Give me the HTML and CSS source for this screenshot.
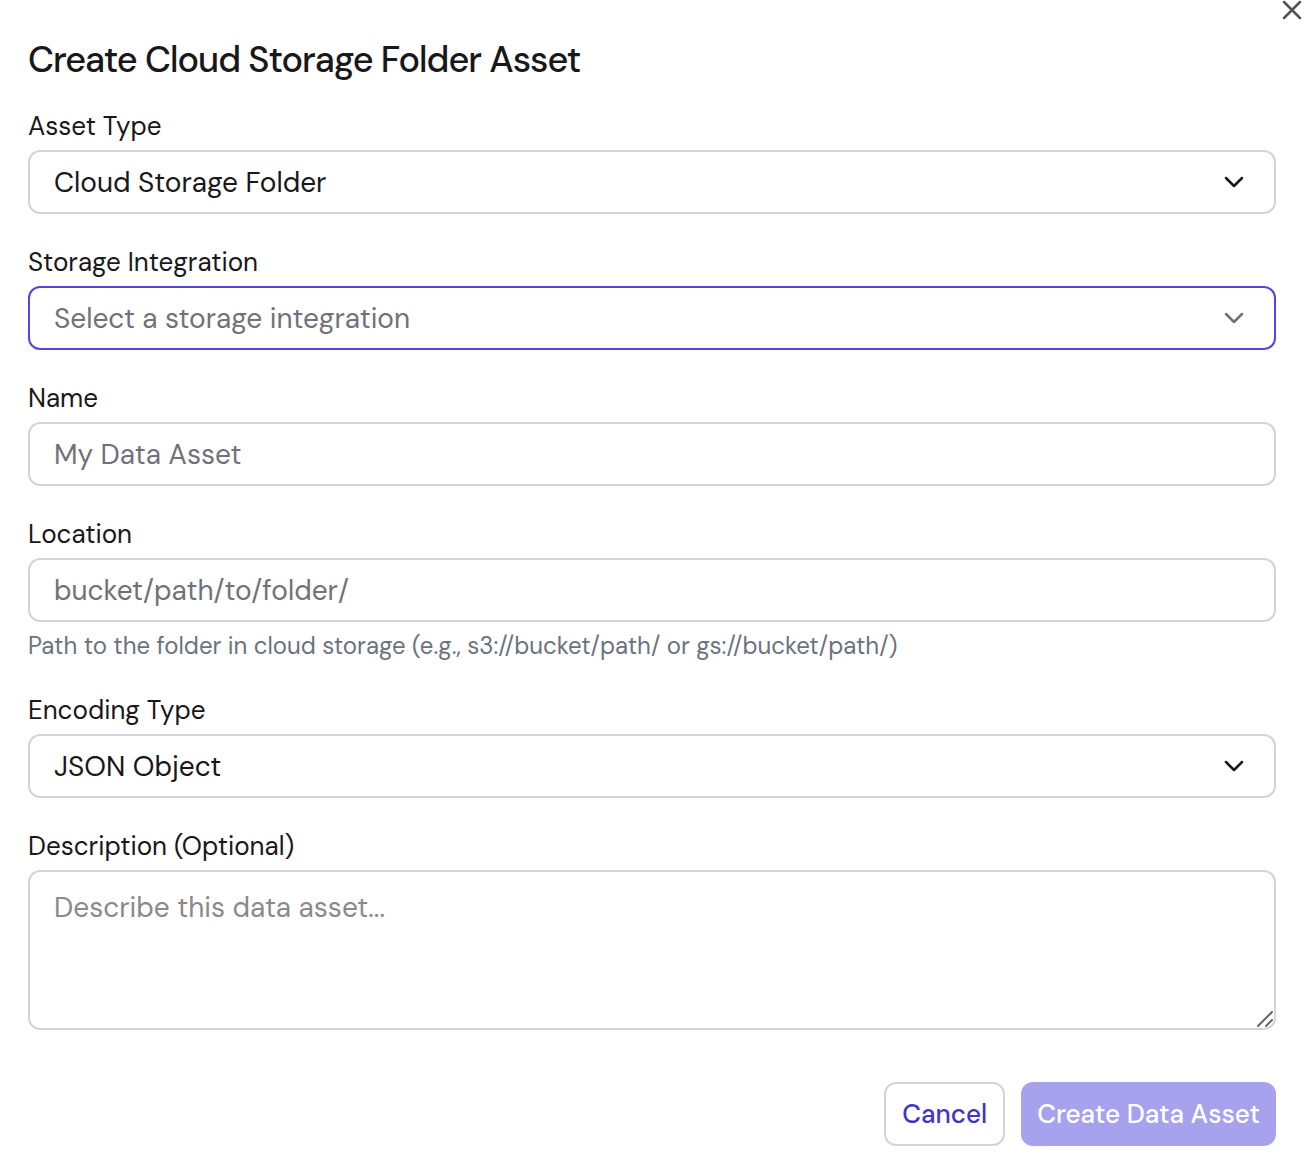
FILE: index.html
```html
<!DOCTYPE html>
<html lang="en">
<head>
    <meta charset="UTF-8">
    <meta name="viewport" content="width=device-width, initial-scale=1">
    <title>Create Cloud Storage Folder Asset</title>
    <link rel="stylesheet" href="styles.css">
</head>
<body>
<main class="dialog">
    <button type="button" class="close" aria-label="Close">
        <svg viewBox="0 0 20 20"><path d="M2 2l16 16M18 2L2 18"/></svg>
    </button>
    <h1 class="title">Create Cloud Storage Folder Asset</h1>
    <form class="form">
        <div class="field">
            <label for="assetType">Asset Type</label>
            <div class="select">
                <select id="assetType" class="control">
                    <option>Cloud Storage Folder</option>
                </select>
                <svg class="chevron" viewBox="0 0 20 12"><path d="M2 2l8 8 8-8"/></svg>
            </div>
        </div>
        <div class="field">
            <label for="integration">Storage Integration</label>
            <div class="select empty">
                <select id="integration" class="control active">
                    <option value="">Select a storage integration</option>
                </select>
                <svg class="chevron" viewBox="0 0 20 12"><path d="M2 2l8 8 8-8"/></svg>
            </div>
        </div>
        <div class="field">
            <label for="name">Name</label>
            <input type="text" id="name" class="control" placeholder="My Data Asset">
        </div>
        <div class="field">
            <label for="location">Location</label>
            <input type="text" id="location" class="control" placeholder="bucket/path/to/folder/" aria-describedby="locationHelp">
            <p class="help" id="locationHelp">Path to the folder in cloud storage (e.g., s3://bucket/path/ or gs://bucket/path/)</p>
        </div>
        <div class="field">
            <label for="encoding">Encoding Type</label>
            <div class="select">
                <select id="encoding" class="control">
                    <option>JSON Object</option>
                </select>
                <svg class="chevron" viewBox="0 0 20 12"><path d="M2 2l8 8 8-8"/></svg>
            </div>
        </div>
        <div class="field">
            <label for="description">Description (Optional)</label>
            <div class="area">
                <textarea id="description" class="control" placeholder="Describe this data asset..."></textarea>
                <svg class="grip" viewBox="0 0 16 16"><path d="M1 15L15 1M9 15l6-6"/></svg>
            </div>
        </div>
        <div class="actions">
            <button type="button" class="btn">Cancel</button>
            <button type="submit" class="btn primary" disabled>Create Data Asset</button>
        </div>
    </form>
</main>
</body>
</html>
```

FILE: styles.css
```css
* {
    box-sizing: border-box;
}
body, h1, p {
    margin: 0;
}
body {
    background: #fff;
    color: #18181b;
}
body, button, input, select, textarea {
    font-family: "DM Sans", Inter, "Liberation Sans", sans-serif;
}
svg {
    display: block;
    fill: none;
    stroke: currentColor;
    stroke-linecap: round;
    stroke-linejoin: round;
}
.dialog {
    position: relative;
    padding: 42px 28px 12px;
}
.title {
    margin-bottom: 32px;
    font-size: 36px;
    line-height: 36px;
    font-weight: 500;
    letter-spacing: -1px;
}
.close {
    position: absolute;
    top: 0;
    right: 2px;
    padding: 0;
    border: 0;
    background: none;
    color: #52525b;
    cursor: pointer;
}
.close svg {
    width: 20px;
    height: 20px;
    stroke-width: 2.5;
}
.form {
    display: flex;
    flex-direction: column;
    gap: 32px;
}
.field {
    display: flex;
    flex-direction: column;
    gap: 8px;
}
.field label {
    font-size: 26px;
    line-height: 32px;
}
.control {
    display: block;
    width: 100%;
    height: 64px;
    padding: 0 24px;
    border: 2px solid #d4d4d8;
    border-radius: 12px;
    outline: none;
    background: #fff;
    color: #18181b;
    font-size: 28px;
    appearance: none;
}
.control::placeholder {
    color: #71717a;
}
.control.active,
.control:focus {
    border-color: #4f46e5;
}
.select, .area {
    position: relative;
}
.empty, .empty .control {
    color: #71717a;
}
/* sits over the native select */
.chevron {
    position: absolute;
    top: 26px;
    right: 32px;
    width: 20px;
    height: 12px;
    stroke-width: 2.5;
    pointer-events: none;
}
textarea.control {
    height: 160px;
    padding: 16px 24px;
    line-height: 40px;
    resize: vertical;
}
textarea.control::placeholder {
    color: #8a8a8a;
}
textarea::-webkit-resizer {
    background: transparent;
}
.grip {
    position: absolute;
    right: 3px;
    bottom: 3px;
    width: 16px;
    height: 16px;
    color: #666;
    stroke-width: 2;
    pointer-events: none;
}
.help {
    color: #6b7280;
    font-size: 24px;
    line-height: 32px;
}
.actions {
    display: flex;
    justify-content: flex-end;
    gap: 16px;
    margin-top: 20px;
}
.btn {
    height: 64px;
    padding: 0 16px;
    border: 2px solid #d4d4d8;
    border-radius: 12px;
    background: #fff;
    color: #4038c4;
    font-size: 26px;
    font-weight: 500;
    cursor: pointer;
}
.btn.primary {
    padding: 0 14px;
    border-color: #a7a2ee;
    background: #a7a2ee;
    color: #fff;
}
```
